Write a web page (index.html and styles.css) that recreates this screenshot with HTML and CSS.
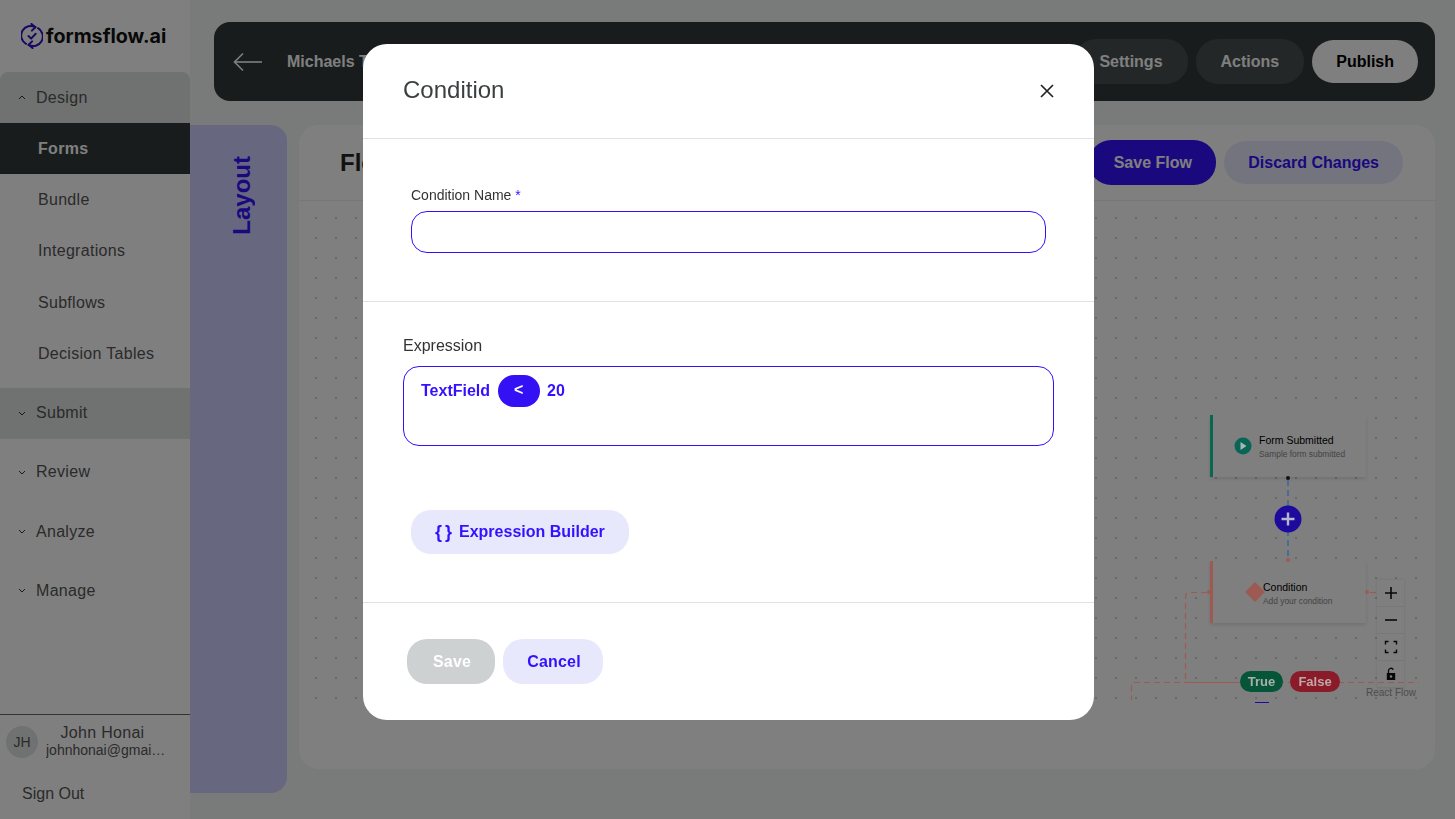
FILE: index.html
```html
<!DOCTYPE html>
<html lang="en">
<head>
    <meta charset="UTF-8">
    <title>formsflow.ai - Condition</title>
    <link rel="stylesheet" href="styles.css">
</head>
<body>
    <!-- Sidebar -->
    <aside class="sidebar">
        <div class="brand">
            <svg class="brand-icon" viewBox="0 0 22 26" width="22" height="26" fill="none" stroke="#2c10c8" stroke-width="2" stroke-linecap="round" stroke-linejoin="round">
                <path d="M14.5 4.2A9.2 9.2 0 0 0 5 20.8"/>
                <path d="M7.5 21.8A9.2 9.2 0 0 0 17 5.2"/>
                <path d="M10.5 1l3.8 3.2-3.4 3.4"/>
                <path d="M11.5 25l-3.8-3.2 3.4-3.4"/>
                <path d="M7.5 13l2.6 2.6 4.6-4.8"/>
            </svg>
            <span class="brand-name">formsflow.ai</span>
        </div>

        <nav class="menu">
            <div class="menu-head menu-head-active menu-head-open">
                <svg class="chev" viewBox="0 0 8 5" width="8" height="5"><path d="M1 4l3-3 3 3" fill="none" stroke="#333" stroke-width="1"/></svg>
                Design
            </div>
            <a class="menu-item menu-item-active">Forms</a>
            <a class="menu-item">Bundle</a>
            <a class="menu-item">Integrations</a>
            <a class="menu-item">Subflows</a>
            <a class="menu-item">Decision Tables</a>

            <div class="menu-head menu-head-active menu-gap">
                <svg class="chev" viewBox="0 0 8 5" width="8" height="5"><path d="M1 1l3 3 3-3" fill="none" stroke="#333" stroke-width="1"/></svg>
                Submit
            </div>
            <div class="menu-head menu-gap">
                <svg class="chev" viewBox="0 0 8 5" width="8" height="5"><path d="M1 1l3 3 3-3" fill="none" stroke="#333" stroke-width="1"/></svg>
                Review
            </div>
            <div class="menu-head menu-gap">
                <svg class="chev" viewBox="0 0 8 5" width="8" height="5"><path d="M1 1l3 3 3-3" fill="none" stroke="#333" stroke-width="1"/></svg>
                Analyze
            </div>
            <div class="menu-head menu-gap">
                <svg class="chev" viewBox="0 0 8 5" width="8" height="5"><path d="M1 1l3 3 3-3" fill="none" stroke="#333" stroke-width="1"/></svg>
                Manage
            </div>
        </nav>

        <div class="user">
            <div class="user-row">
                <div class="avatar">JH</div>
                <div class="user-info">
                    <div class="user-name">John Honai</div>
                    <div class="user-mail">johnhonai@gmail.com</div>
                </div>
            </div>
            <a class="sign-out">Sign Out</a>
        </div>
    </aside>

    <!-- Main area -->
    <main class="main">
        <header class="topbar">
            <svg class="back" viewBox="0 0 30 20" width="30" height="20" fill="none" stroke="#ffffff" stroke-width="1.6">
                <path d="M1 10h28"/>
                <path d="M10 1.5L1.5 10l8.5 8.5"/>
            </svg>
            <span class="form-title">Michaels Test Form</span>
            <div class="top-actions">
                <button class="pill pill-dark">Settings</button>
                <button class="pill pill-dark">Actions</button>
                <button class="pill pill-light">Publish</button>
            </div>
        </header>

        <div class="work">
            <div class="tab"><span class="tab-text">Layout</span></div>

            <section class="panel">
                <div class="panel-head">
                    <h2 class="panel-title">Flow</h2>
                    <div class="panel-actions">
                        <button class="pill pill-primary">Save Flow</button>
                        <button class="pill pill-soft">Discard Changes</button>
                    </div>
                </div>

                <!-- Flow diagram -->
                <div class="canvas">
                    <svg class="edges" viewBox="299 201 1136 502" width="1136" height="502" fill="none">
                        <path class="edge-blue" d="M1288 480V560"/>
                        <path class="edge-red" d="M1207 592.5H1190Q1185.5 592.5 1185.5 597V677Q1185.5 682.5 1190 682.5H1419"/>
                        <path class="edge-red" d="M1370 592.5H1377"/>
                        <path class="edge-red" d="M1240 682.5H1135Q1131.5 682.5 1131.5 686V700"/>
                    </svg>

                    <div class="node node-green">
                        <svg class="node-play" viewBox="0 0 18 18" width="18" height="18"><circle cx="9" cy="9" r="8.5" fill="#0a6556"/><path d="M6.5 5l6 4-6 4z" fill="#a8b8b4"/></svg>
                        <div class="node-text">
                            <div class="node-title">Form Submitted</div>
                            <div class="node-sub">Sample form submitted</div>
                        </div>
                    </div>
                    <span class="handle handle-black"></span>

                    <div class="add-btn">
                        <svg viewBox="0 0 28 28" width="28" height="28"><circle cx="14" cy="14" r="13.5" fill="#1f0a9e"/><path d="M14 7.5v13M7.5 14h13" stroke="#b8b8c8" stroke-width="2.4"/></svg>
                    </div>

                    <span class="handle handle-top"></span>
                    <div class="node node-red">
                        <span class="diamond"></span>
                        <div class="node-text">
                            <div class="node-title">Condition</div>
                            <div class="node-sub">Add your condition</div>
                        </div>
                    </div>
                    <span class="handle handle-left"></span>
                    <span class="handle handle-right"></span>

                    <span class="branch branch-true">True</span>
                    <span class="branch branch-false">False</span>
                    <span class="next-node"></span>

                    <div class="controls">
                        <div class="ctrl"><svg viewBox="0 0 14 14" width="14" height="14"><path d="M7 1v12M1 7h12" stroke="#111" stroke-width="1.6"/></svg></div>
                        <div class="ctrl"><svg viewBox="0 0 14 14" width="14" height="14"><path d="M1 7h12" stroke="#111" stroke-width="1.6"/></svg></div>
                        <div class="ctrl"><svg viewBox="0 0 14 14" width="14" height="14" fill="none"><path d="M1.5 4.5V1.5H4.5M9.5 1.5H12.5V4.5M12.5 9.5V12.5H9.5M4.5 12.5H1.5V9.5" stroke="#111" stroke-width="1.4"/></svg></div>
                        <div class="ctrl"><svg viewBox="0 0 14 14" width="14" height="14"><path d="M4.5 6.5V3.8a2.5 2.5 0 0 1 4.8-1" fill="none" stroke="#111" stroke-width="1.3"/><path d="M2.8 6h8.4v7H2.8z" fill="#111"/><circle cx="7" cy="9.5" r="1.2" fill="#fff"/></svg></div>
                    </div>
                    <span class="attribution">React Flow</span>
                </div>
            </section>
        </div>
    </main>

    <div class="backdrop"></div>

    <!-- Condition modal -->
    <div class="modal">
        <div class="modal-head">
            <h3 class="modal-title">Condition</h3>
            <svg class="close" viewBox="0 0 14 14" width="14" height="14"><path d="M1 1l12 12M13 1L1 13" stroke="#222" stroke-width="1.7"/></svg>
        </div>

        <div class="modal-name">
            <label class="name-label">Condition Name <span class="required">*</span></label>
            <input class="name-input" type="text">
        </div>

        <div class="modal-expr">
            <div class="expr-label">Expression</div>
            <div class="expr-box">
                <span class="expr-text">TextField</span>
                <span class="expr-op">&lt;</span>
                <span class="expr-text">20</span>
            </div>
            <button class="builder-btn"><span class="builder-icon">{}</span> Expression Builder</button>
        </div>

        <div class="modal-foot">
            <button class="foot-btn foot-save">Save</button>
            <button class="foot-btn foot-cancel">Cancel</button>
        </div>
    </div>
</body>
</html>
```

FILE: styles.css
```css
body {
    margin: 0;
    height: 819px;
    overflow: hidden;
    display: flex;
    font-family: "Liberation Sans", Arial, sans-serif;
    background-color: #f3f6f5;
    color: #333;
}

button {
    font-family: "Liberation Sans", Arial, sans-serif;
    border: none;
}

/* Sidebar */
.sidebar {
    width: 190px;
    flex-shrink: 0;
    height: 819px;
    display: flex;
    flex-direction: column;
    background-color: #fff;
}

.brand {
    height: 72px;
    box-sizing: border-box;
    padding: 0 0 0 21px;
    display: flex;
    align-items: center;
    gap: 3px;
}

.brand-name {
    font-family: Inter, sans-serif;
    font-size: 19.7px;
    font-weight: 700;
    color: #111;
}

.menu-head {
    height: 51px;
    display: flex;
    align-items: center;
    gap: 10px;
    padding-left: 18px;
    font-size: 16px;
    letter-spacing: 0.3px;
    color: #555;
}

.menu-head-active {
    background-color: #dfe4e1;
}

.menu-head-open {
    border-radius: 8px 8px 0 0;
}

.menu-gap {
    margin-top: 8.2px;
}

.menu-item {
    height: 51.3px;
    display: flex;
    align-items: center;
    padding-left: 38px;
    font-size: 16px;
    letter-spacing: 0.3px;
    color: #555;
}

.menu-item-active {
    background-color: #333838;
    color: #fff;
    font-weight: 700;
}

.user {
    margin-top: auto;
    border-top: 1px solid #666;
    height: 105px;
    box-sizing: border-box;
    padding: 9px 6px 0;
}

.user-row {
    display: flex;
    align-items: center;
    gap: 8px;
}

.avatar {
    width: 32px;
    height: 32px;
    border-radius: 50%;
    flex-shrink: 0;
    display: flex;
    align-items: center;
    justify-content: center;
    background-color: #dfe4e1;
    font-size: 14px;
    color: #555;
}

.user-info {
    width: 120px;
    text-align: center;
}

.user-name {
    font-size: 16px;
    line-height: 18px;
    letter-spacing: 0.3px;
    padding-right: 7px;
    color: #555;
}

.user-mail {
    font-size: 14px;
    line-height: 17px;
    color: #555;
    overflow: hidden;
    text-overflow: ellipsis;
    white-space: nowrap;
}

.sign-out {
    display: block;
    margin: 26px 0 0 16px;
    font-size: 16px;
    color: #555;
}

/* Main */
.main {
    flex: 1;
    min-width: 0;
    display: flex;
    flex-direction: column;
}

.topbar {
    height: 79px;
    margin: 22px 20px 24px 24px;
    padding: 0 17px 0 19px;
    display: flex;
    align-items: center;
    background-color: #333838;
    border-radius: 16px;
}

.form-title {
    margin-left: 24px;
    font-size: 16px;
    font-weight: 700;
    color: #fff;
}

.top-actions {
    margin-left: auto;
    display: flex;
    align-items: center;
    gap: 8px;
}

.pill {
    height: 45px;
    border-radius: 22px;
    font-size: 16px;
    font-weight: 700;
    padding: 0 24px;
}

.pill-dark {
    background-color: #464e4e;
    color: #fff;
    padding: 0 25px;
}

.pill-light {
    height: 43px;
    background-color: #fff;
    color: #000;
}

.pill-primary {
    background-color: #3410ff;
    color: #fff;
    width: 127px;
}

.pill-soft {
    height: 43px;
    background-color: #e8e8fc;
    color: #3410ff;
}

.work {
    flex: 1;
    display: flex;
    gap: 12px;
    padding-right: 20px;
    margin-bottom: 26px;
}

.tab {
    width: 97px;
    height: 668px;
    box-sizing: border-box;
    padding: 31px 0 0 38px;
    background-color: #ced1ff;
    border-radius: 0 16px 16px 0;
}

.tab-text {
    display: block;
    writing-mode: vertical-rl;
    transform: rotate(180deg);
    font-size: 24px;
    font-weight: 700;
    color: #3410ff;
}

.panel {
    flex: 1;
    height: 644px;
    background-color: #fff;
    border-radius: 20px;
}

.panel-head {
    height: 76px;
    box-sizing: border-box;
    padding: 0 32px 0 41px;
    display: flex;
    align-items: center;
    justify-content: space-between;
    border-bottom: 1px solid #eee;
}

.panel-title {
    margin: 0;
    font-size: 24px;
    color: #222;
}

.panel-actions {
    display: flex;
    align-items: center;
    gap: 8px;
}

/* Canvas, items sit at their diagram coordinates */
.canvas {
    position: relative;
    height: 502px;
    background-image: radial-gradient(circle, #d0d0d0 1px, transparent 1.2px);
    background-size: 20px 20px;
    background-position: 7px 7px;
}

.edges {
    position: absolute;
    left: 0;
    top: 0;
    z-index: 11;
}

.edge-blue {
    stroke: #3a6699;
    stroke-width: 1.5;
    stroke-dasharray: 6 4;
}

.edge-red {
    stroke: #9c5a52;
    stroke-width: 1.2;
    stroke-dasharray: 6 4;
}

.node {
    position: absolute;
    left: 911px;
    width: 156px;
    height: 62px;
    box-sizing: border-box;
    padding-left: 3px;
    display: flex;
    align-items: center;
    background-color: #fff;
    box-shadow: 0 2px 4px rgba(0, 0, 0, 0.12);
}

/* accent bar stays bright over the backdrop */
.node::before {
    content: "";
    position: absolute;
    left: 0;
    top: 0;
    width: 3px;
    height: 62px;
    z-index: 11;
}

.node-green {
    top: 214px;
}

.node-green::before {
    background-color: #09664f;
}

.node-red {
    top: 360px;
}

.node-red::before {
    background-color: #9c5a52;
}

.node-play {
    position: relative;
    margin: 0 7px 0 21px;
    z-index: 11;
}

.node-text {
    padding-top: 2px;
}

.node-title {
    font-size: 10.5px;
    line-height: 14px;
    color: #000;
}

.node-sub {
    font-size: 8.4px;
    line-height: 14px;
    color: #888;
}

.diamond {
    position: absolute;
    left: 38px;
    top: 24px;
    width: 14px;
    height: 14px;
    background-color: #9c5a52;
    transform: rotate(45deg);
    z-index: 11;
}

.node-red .node-text {
    margin-left: 50px;
    padding-top: 3px;
}

.handle {
    position: absolute;
    width: 4px;
    height: 4px;
    border-radius: 50%;
    background-color: #9c5a52;
    z-index: 11;
}

.handle-black {
    left: 987px;
    top: 275px;
    background-color: #111;
}

.handle-top {
    left: 987px;
    top: 357px;
}

.handle-left {
    left: 908px;
    top: 389px;
}

.handle-right {
    left: 1066px;
    top: 389px;
}

.add-btn {
    position: absolute;
    left: 975px;
    top: 304px;
    width: 28px;
    height: 28px;
    z-index: 11;
}

.branch {
    position: absolute;
    top: 470px;
    height: 21px;
    border-radius: 11px;
    display: flex;
    align-items: center;
    justify-content: center;
    font-size: 13px;
    font-weight: 700;
    color: #a8b0ac;
    z-index: 11;
}

.branch-true {
    left: 941px;
    width: 43px;
    background-color: #065538;
}

.branch-false {
    left: 991px;
    width: 50px;
    background-color: #8a1c2a;
    color: #c0a8a8;
}

.next-node {
    position: absolute;
    left: 956px;
    top: 501px;
    width: 14px;
    height: 1px;
    background-color: #1f0a9e;
    z-index: 11;
}

.controls {
    position: absolute;
    left: 1078px;
    top: 379px;
    width: 27px;
    box-shadow: 0 0 2px 1px rgba(0, 0, 0, 0.06);
}

.ctrl {
    height: 26px;
    display: flex;
    align-items: center;
    justify-content: center;
    background-color: #fefefe;
    border-bottom: 1px solid #eee;
}

.attribution {
    position: absolute;
    left: 1067px;
    top: 486px;
    font-size: 10px;
    color: #999;
}

/* Overlay and modal */
.backdrop {
    position: fixed;
    inset: 0;
    background-color: rgba(0, 0, 0, 0.5);
    z-index: 10;
}

.modal {
    position: fixed;
    left: 363px;
    top: 44px;
    width: 731px;
    height: 676px;
    background-color: #fff;
    border-radius: 24px;
    z-index: 20;
    overflow: hidden;
}

.modal-head {
    height: 95px;
    box-sizing: border-box;
    padding: 0 40px 2px;
    display: flex;
    align-items: center;
    justify-content: space-between;
    border-bottom: 1px solid #dee2e6;
}

.modal-title {
    margin: 0;
    font-size: 24px;
    font-weight: 400;
    color: #3a3f3f;
}

.close {
    margin-top: 1px;
}

.modal-name {
    height: 163px;
    box-sizing: border-box;
    padding: 48px 48px 0;
    border-bottom: 1px solid #dee2e6;
}

.name-label {
    display: block;
    height: 24px;
    font-size: 14px;
    line-height: 16px;
    color: #333;
}

.required {
    color: #3410ff;
}

.name-input {
    display: block;
    width: 635px;
    height: 42px;
    box-sizing: border-box;
    border: 1px solid #3410ff;
    border-radius: 16px;
    outline: none;
}

.modal-expr {
    height: 301px;
    box-sizing: border-box;
    padding: 34px 40px 0;
    border-bottom: 1px solid #dee2e6;
}

.expr-label {
    height: 30px;
    font-size: 16px;
    line-height: 19px;
    color: #333;
}

.expr-box {
    width: 651px;
    height: 80px;
    box-sizing: border-box;
    padding: 8px 17px;
    display: flex;
    align-items: flex-start;
    gap: 7.5px;
    border: 1px solid #3410ff;
    border-radius: 16px;
}

.expr-text {
    font-size: 16px;
    font-weight: 700;
    line-height: 32px;
    color: #3410ff;
}

.expr-op {
    width: 42px;
    height: 32px;
    border-radius: 16px;
    background-color: #3410f5;
    color: #fff;
    font-size: 16px;
    font-weight: 700;
    line-height: 30px;
    text-align: center;
}

.builder-btn {
    display: flex;
    align-items: center;
    gap: 4px;
    margin: 64px 0 0 8px;
    width: 218px;
    height: 44px;
    padding: 0 0 0 24px;
    border-radius: 20px;
    background-color: #e8e8fc;
    font-size: 16px;
    font-weight: 700;
    color: #3410ff;
}

.builder-icon {
    letter-spacing: 3px;
    font-size: 18px;
}

.modal-foot {
    display: flex;
    gap: 8px;
    padding: 36px 44px 0;
}

.foot-btn {
    height: 45px;
    border-radius: 20px;
    padding: 0 0 0 2px;
    font-size: 16px;
    font-weight: 700;
    letter-spacing: 0.2px;
}

.foot-save {
    width: 88px;
    background-color: #cdd1d1;
    color: #fff;
}

.foot-cancel {
    width: 100px;
    background-color: #e8e8fc;
    color: #3410ff;
}
```
